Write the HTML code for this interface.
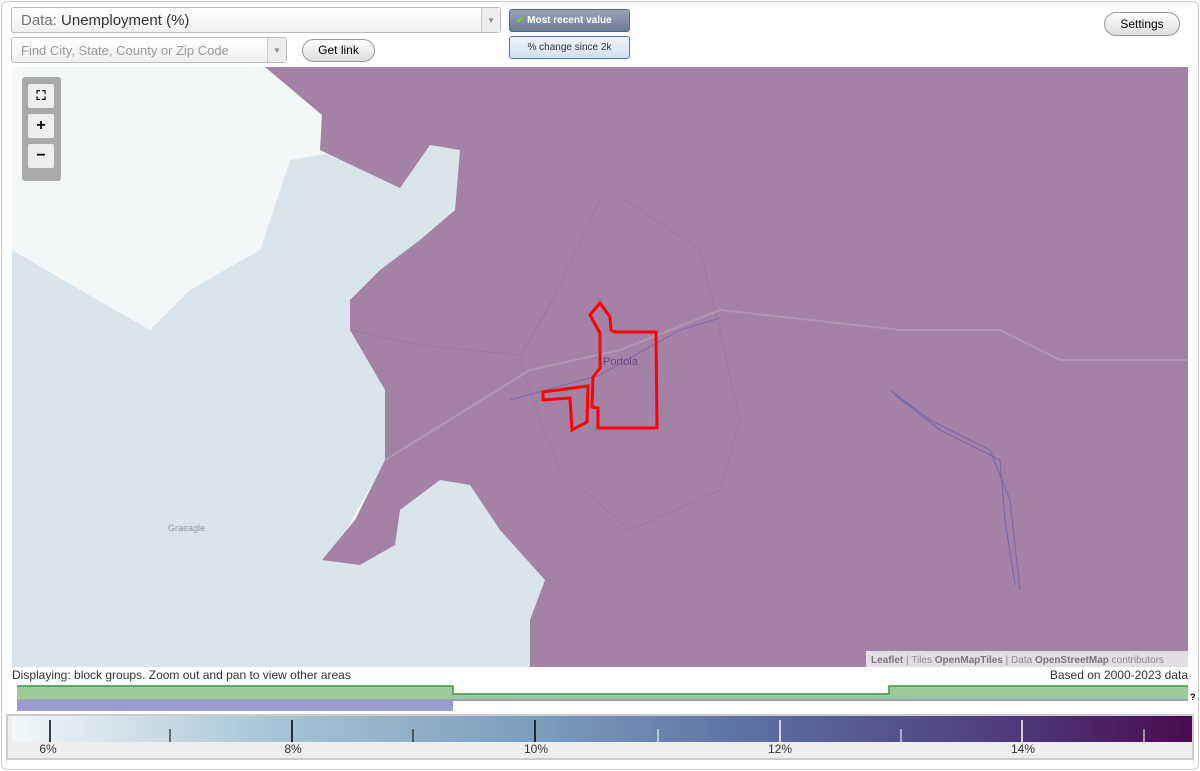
<!DOCTYPE html>
<html><head><meta charset="utf-8"><style>
body{margin:0;width:1200px;height:771px;background:#fff;font-family:"Liberation Sans",sans-serif;position:relative;overflow:hidden}
.frame{position:absolute;left:1px;top:1px;width:1196px;height:767px;border:1px solid #ccc;border-radius:6px}
.sel{position:absolute;background:linear-gradient(#fff,#f0f0f0);border:1px solid #bbb;border-radius:3px;box-sizing:border-box}
.arr{position:absolute;right:0;top:0;bottom:0;width:18px;border-left:1px solid #ccc;background:#eee;color:#888;font-size:8px;text-align:center}
.btn{position:absolute;border:1px solid #999;border-radius:12px;background:linear-gradient(#fff,#ddd);font-size:12px;text-align:center;box-sizing:border-box}
.ctl{position:absolute;left:22px;top:77px;width:39px;height:104px;background:#aaa;border-radius:3px}
.ctl div{position:absolute;left:6px;width:26px;height:24px;background:#eee;border-radius:2px;text-align:center;font-weight:bold;font-size:16px;line-height:24px}
</style></head><body>
<div class="frame"></div>
<div class="sel" style="left:11px;top:7px;width:490px;height:26px;font-size:15px;line-height:25px;padding-left:9px;color:#333"><span style="color:#777">Data:</span> Unemployment (%)<div class="arr" style="line-height:25px">▼</div></div>
<div class="sel" style="left:11px;top:37px;width:276px;height:26px;font-size:13px;line-height:25px;padding-left:9px;color:#999">Find City, State, County or Zip Code<div class="arr" style="line-height:25px">▼</div></div>
<div class="btn" style="left:302px;top:39px;width:73px;height:23px;line-height:21px">Get link</div>
<div style="position:absolute;left:509px;top:9px;width:121px;height:23px;border:1px solid #4a6a9a;border-radius:3px;background:linear-gradient(#9aa4b8,#6e7c98);color:#fff;font-size:10px;font-weight:bold;line-height:22px;box-sizing:border-box;padding-left:6px"><span style="color:#7c3">✔</span> Most recent value</div>
<div style="position:absolute;left:509px;top:36px;width:121px;height:23px;border:1px solid #4a7ab0;border-radius:3px;background:linear-gradient(#eef4fb,#cfe0f2);color:#333;font-size:10px;line-height:22px;text-align:center;box-sizing:border-box">% change since 2k</div>
<div class="btn" style="left:1104px;top:12px;width:76px;height:24px;line-height:22px">Settings</div>
<svg style="position:absolute;left:12px;top:67px" width="1176" height="600" viewBox="12 67 1176 600">
<rect x="12" y="67" width="1176" height="600" fill="#f3f7f8"/>
<path d="M12 250 L80 290 L150 330 L190 290 L260 250 L290 160 L350 150 L400 188 L430 145 L460 150 L455 210 L400 260 L350 300 L385 390 L385 460 L330 560 L400 510 L440 480 L470 485 L545 580 L530 667 L12 667Z" fill="#d9e5ea"/>
<path d="M265 67 L322 115 L320 150 L400 188 L430 145 L460 150 L455 210 L420 240 L380 270 L350 300 L350 330 L385 390 L385 460 L355 520 L322 560 L360 565 L395 545 L400 510 L440 480 L470 485 L500 530 L545 580 L530 620 L530 667 L1188 667 L1188 67Z" fill="#a482a5"/>
<g fill="none" stroke="#8a6a90" stroke-width="0.6" opacity="0.5">
<path d="M555 295 L600 200 L625 200 L700 250 L715 310 L740 420 L720 490 L630 530 L560 470 L540 420 L520 360 Z"/>
<path d="M350 330 L420 345 L520 355 L555 295"/>
</g>
<path d="M385 460 L530 370 L620 350 L720 310 L900 330 L1000 330 L1060 360 L1188 360" fill="none" stroke="#b89cba" stroke-width="2" opacity="0.7"/>
<path d="M510 400 L600 375 L680 330 L720 318" fill="none" stroke="#7a6aa8" stroke-width="1"/>
<path d="M890 390 L930 420 L990 450 L1010 500 L1020 590 M895 395 L940 430 L1000 460 L1005 520 L1015 585" fill="none" stroke="#7a6aa8" stroke-width="1.2"/>
<path d="M600 303 L610 317 L611 330 L615 332 L656 332 L657 428 L598 428 L598 408 L592 407 L593 377 L600 368 L600 333 L590 315 Z M543 392 L588 386 L587 422 L572 430 L570 398 L543 400 Z" fill="none" stroke="#f00" stroke-width="3"/>
<text x="603" y="365" font-size="11" fill="#6a4a7a" font-family="Liberation Sans">Portola</text>
<text x="168" y="531" font-size="9" fill="#8a9aa0" font-family="Liberation Sans">Graeagle</text>
<rect x="866" y="651" width="322" height="16" fill="#eee" opacity="0.85"/>
<text x="871" y="663" font-size="10" fill="#888" font-family="Liberation Sans"><tspan font-weight="bold" fill="#777">Leaflet</tspan> | Tiles <tspan font-weight="bold" fill="#777">OpenMapTiles</tspan> | Data <tspan font-weight="bold" fill="#777">OpenStreetMap</tspan> contributors</text>
</svg>
<div class="ctl"><div style="top:7px;font-size:13px">⛶</div><div style="top:37px">+</div><div style="top:67px">−</div></div>
<div style="position:absolute;left:12px;top:668px;font-size:12px;color:#333">Displaying: block groups. Zoom out and pan to view other areas</div>
<div style="position:absolute;right:12px;top:668px;font-size:12px;color:#333">Based on 2000-2023 data</div>
<svg style="position:absolute;left:0;top:684px" width="1200" height="30">
<path d="M17 2 H453 V10 H889 V2 H1188 V15 H17Z" fill="#9ccc98"/>
<path d="M17 2 H453 V10 H889 V2 H1188" fill="none" stroke="#3a9a3a" stroke-width="1.5"/>
<rect x="17" y="15" width="436" height="12" fill="#9c9ccc"/>
<rect x="453" y="15" width="735" height="2" fill="#9c9ccc"/>
<text x="1190" y="16" font-size="9" font-weight="bold">?</text>
</svg>
<div style="position:absolute;left:6px;top:714px;width:1184px;height:42px;border:2px solid #ccc;background:#eee">
<div style="position:absolute;left:4px;top:0;right:0;height:26px;background:linear-gradient(90deg,#f2f7f9,#a7c4d6 22%,#7a9cbd 45%,#5a6a9e 65%,#4e3a7a 85%,#4a0a4e)"></div>
<svg style="position:absolute;left:0;top:0" width="1184" height="42">
<g stroke-width="1.5"><line x1="42" y1="4" x2="42" y2="26" stroke="#000"/><line x1="284" y1="4" x2="284" y2="26" stroke="#000"/><line x1="527" y1="4" x2="527" y2="26" stroke="#000"/><line x1="772" y1="4" x2="772" y2="26" stroke="#fff"/><line x1="1014" y1="4" x2="1014" y2="26" stroke="#fff"/></g>
<g stroke-width="1"><line x1="162" y1="13" x2="162" y2="26" stroke="#000"/><line x1="405" y1="13" x2="405" y2="26" stroke="#000"/><line x1="650" y1="13" x2="650" y2="26" stroke="#fff"/><line x1="893" y1="13" x2="893" y2="26" stroke="#fff"/><line x1="1136" y1="13" x2="1136" y2="26" stroke="#fff"/></g>
<g font-size="12" fill="#333" font-family="Liberation Sans" text-anchor="middle"><text x="40" y="37">6%</text><text x="285" y="37">8%</text><text x="528" y="37">10%</text><text x="772" y="37">12%</text><text x="1015" y="37">14%</text></g>
</svg></div>
</body></html>
